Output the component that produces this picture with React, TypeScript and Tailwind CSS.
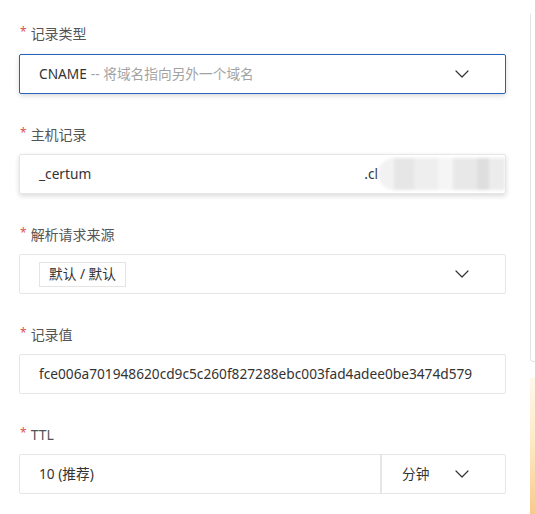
import React from 'react';

const font = { fontFamily: '"Noto Sans", "Noto Sans CJK SC", sans-serif' };

const Chevron: React.FC = () => (
  <svg width="14" height="8" viewBox="0 0 14 8" fill="none" className="shrink-0">
    <path d="M1 1l6 6 6-6" stroke="#333" strokeWidth="1.2" strokeLinecap="round" strokeLinejoin="round" />
  </svg>
);

const Label: React.FC<{ text: string }> = ({ text }) => (
  <div className="flex items-center h-5 pl-5 text-[14px] text-[#555]">
    <span className="text-[#d9534f] text-[12px] mr-1 relative top-[-1px]">*</span>
    {text}
  </div>
);

const App: React.FC = () => {
  return (
    <div className="w-[535px] h-[514px] bg-white overflow-hidden flex" style={font}>
      <div className="w-[530px] shrink-0 pt-[23px]">
        {/* 记录类型 */}
        <Label text="记录类型" />
        <div className="ml-[19px] mt-[11px] w-[487px] h-10 border border-[#2563b8] rounded-[2px] shadow-[0_2px_5px_rgba(0,0,0,0.15)] flex items-center pl-[19px] pr-[36px] text-[13.7px]">
          <span className="text-[#333]">CNAME</span>
          <span className="text-[#a3a3a3] ml-1">-- 将域名指向另外一个域名</span>
          <div className="flex-1" />
          <Chevron />
        </div>

        {/* 主机记录 */}
        <div className="mt-[30px]">
          <Label text="主机记录" />
        </div>
        <div className="ml-[19px] mt-[10px] w-[487px] h-10 border border-[#e6e6e6] rounded-[2px] shadow-[0_2px_5px_rgba(0,0,0,0.15)] flex items-center pl-[19px] text-[13.7px] text-[#333] overflow-hidden">
          <span>_certum</span>
          <div className="flex-1" />
          <span>.cl</span>
          <div className="w-[127px] h-[32px] flex rounded-l-full overflow-hidden blur-[1.5px]">
            <div className="w-4 bg-[#f2f2f2]" />
            <div className="w-5 bg-[#e6e6e6]" />
            <div className="w-6 bg-[#eeeeee]" />
            <div className="w-4 bg-[#f5f5f5]" />
            <div className="w-6 bg-[#e8e8e8]" />
            <div className="w-3 bg-[#dedede]" />
            <div className="w-4 bg-[#ececec]" />
            <div className="flex-1 bg-[#f3f3f3]" />
          </div>
        </div>

        {/* 解析请求来源 */}
        <div className="mt-[30px]">
          <Label text="解析请求来源" />
        </div>
        <div className="ml-[19px] mt-[10px] w-[487px] h-10 border border-[#e6e6e6] rounded-[2px] flex items-center pl-[19px] pr-[36px] text-[13.7px] text-[#333]">
          <span className="h-[25px] px-[9px] border border-[#e4e4e4] flex items-center">默认 / 默认</span>
          <div className="flex-1" />
          <Chevron />
        </div>

        {/* 记录值 */}
        <div className="mt-[30px]">
          <Label text="记录值" />
        </div>
        <div className="ml-[19px] mt-[10px] w-[487px] h-10 border border-[#e6e6e6] rounded-[2px] flex items-center pl-[19px] text-[13.7px] text-[#333] overflow-hidden whitespace-nowrap">
          fce006a701948620cd9c5c260f827288ebc003fad4adee0be3474d579
        </div>

        {/* TTL */}
        <div className="mt-[30px]">
          <Label text="TTL" />
        </div>
        <div className="ml-[19px] mt-[10px] w-[487px] h-10 border border-[#e6e6e6] rounded-[2px] flex text-[13.7px] text-[#333]">
          <div className="w-[362px] flex items-center pl-[19px] border-r-2 border-[#e6e6e6]">10 (推荐)</div>
          <div className="flex-1 flex items-center pl-[20px] pr-[36px]">
            <span>分钟</span>
            <div className="flex-1" />
            <Chevron />
          </div>
        </div>
      </div>

      {/* right side panel edge */}
      <div className="flex-1 flex flex-col pt-[14px]">
        <div className="h-[348px] border-l border-b border-[#e3e3e3] rounded-bl-[4px]" />
        <div className="mt-[16px] flex-1 bg-gradient-to-b from-[#fff8ea] via-[#fde8c4] to-[#f8c98a]" />
      </div>
    </div>
  );
};

export default App;
